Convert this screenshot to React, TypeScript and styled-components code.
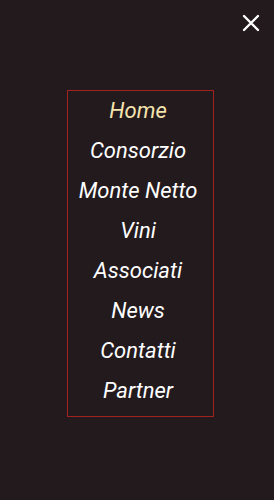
import React from 'react';
import styled, { createGlobalStyle } from 'styled-components';

const GlobalStyle = createGlobalStyle`
  html, body {
    margin: 0;
    padding: 0;
    background-color: #231a1e;
  }
`;

const Overlay = styled.div`
  width: 274px;
  height: 500px;
  background-color: #231a1e;
  display: flex;
  flex-direction: column;
  align-items: flex-start;
  font-family: Roboto, "Liberation Sans", sans-serif;
  box-sizing: border-box;
`;

const TopBar = styled.div`
  width: 100%;
  height: 90px;
  display: flex;
  justify-content: flex-end;
  align-items: flex-start;
`;

const CloseButton = styled.button`
  background: none;
  border: none;
  padding: 0;
  margin: 14px 14px 0 0;
  width: 18px;
  height: 18px;
  cursor: pointer;
  display: flex;
`;

const MenuBox = styled.nav`
  margin-left: 67px;
  width: 140px;
  border: 1px solid #a3221f;
  padding: 0 5px 5px 0;
  display: flex;
  flex-direction: column;
  align-items: center;
`;

const MenuItem = styled.a<{ $active?: boolean }>`
  height: 40px;
  line-height: 39px;
  font-size: 22px;
  font-style: italic;
  color: ${(p) => (p.$active ? '#f5e3ae' : '#ffffff')};
  text-decoration: none;
  white-space: nowrap;
`;

const items = ['Home', 'Consorzio', 'Monte Netto', 'Vini', 'Associati', 'News', 'Contatti', 'Partner'];

export default function App() {
  return (
    <>
      <GlobalStyle />
      <Overlay>
        <TopBar>
          <CloseButton aria-label="Chiudi">
            <svg width="18" height="18" viewBox="0 0 18 18">
              <path d="M2 2 L16 16 M16 2 L2 16" stroke="#ffffff" strokeWidth="2.4" strokeLinecap="round" />
            </svg>
          </CloseButton>
        </TopBar>
        <MenuBox>
          {items.map((label, i) => (
            <MenuItem key={label} href="#" $active={i === 0}>
              {label}
            </MenuItem>
          ))}
        </MenuBox>
      </Overlay>
    </>
  );
}
